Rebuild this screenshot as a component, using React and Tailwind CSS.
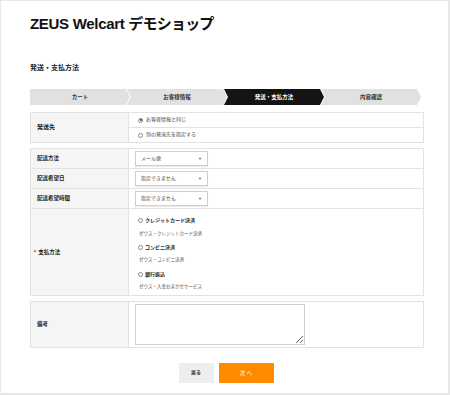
import { useState } from "react";

const steps = ["カート", "お客様情報", "発送・支払方法", "内容確認"];

const jp = "font-['Liberation_Sans','Noto_Sans_CJK_JP',sans-serif]";

const Radio = ({ checked }) => (
  <span className="w-[5px] h-[5px] rounded-full border border-[#888] bg-white flex items-center justify-center shrink-0">
    {checked && <span className="w-[2px] h-[2px] rounded-full bg-[#333]" />}
  </span>
);

const Select = ({ value }) => (
  <div className="w-[73px] h-[15px] border border-[#cfcfcf] bg-white flex items-center justify-between px-[5px] text-[5px] text-[#444] shadow-[0_1px_1px_rgba(0,0,0,0.08)]">
    <span>{value}</span>
    <span className="text-[4px] text-[#666]">▼</span>
  </div>
);

const App = () => {
  const [dest, setDest] = useState(0);

  return (
    <div className={`w-[450px] h-[395px] bg-white border-l border-t border-r-2 border-b-2 border-[#e8e8e8] overflow-hidden ${jp}`}>
      <div className="pl-[29px] pr-[24px]">
        {/* Title */}
        <h1 className="pt-[12px] text-[15px] leading-[22px] font-bold text-[#111] tracking-[-0.3px]">
          ZEUS Welcart <span className="tracking-[-0.8px]">デモショップ</span>
        </h1>

        <h2 className="mt-[28px] text-[7px] leading-[10px] font-bold text-[#222]">発送・支払方法</h2>

        {/* Steps */}
        <div className="mt-[16px] flex h-[16px]">
          {steps.map((s, i) => (
            <div
              key={s}
              className={`w-[100px] h-full flex items-center justify-center text-[5.5px] font-bold ${
                i === 0 ? "" : "-ml-[3px]"
              } ${i === 2 ? "bg-[#141414] text-white" : "bg-[#e1e1e1] text-[#333]"} ${
                i === 0
                  ? "[clip-path:polygon(0_0,calc(100%-4px)_0,100%_50%,calc(100%-4px)_100%,0_100%)]"
                  : "[clip-path:polygon(0_0,calc(100%-4px)_0,100%_50%,calc(100%-4px)_100%,0_100%,4px_50%)]"
              }`}
            >
              {s}
            </div>
          ))}
        </div>

        {/* Destination */}
        <div className="mt-[7px] border border-[#e2e2e2] grid grid-cols-[98px_1fr] h-[31px]">
          <div className="bg-[#f5f5f5] border-r border-[#e2e2e2] flex items-center pl-[6px] text-[6px] font-bold text-[#222]">
            発送先
          </div>
          <div className="flex flex-col">
            {["お客様情報と同じ", "別の発送先を指定する"].map((t, i) => (
              <div
                key={t}
                onClick={() => setDest(i)}
                className={`flex-1 flex items-center gap-[3px] pl-[9px] text-[5px] text-[#444] ${
                  i === 0 ? "border-b border-[#e2e2e2]" : ""
                }`}
              >
                <Radio checked={dest === i} />
                {t}
              </div>
            ))}
          </div>
        </div>

        {/* Delivery + payment */}
        <div className="mt-[5px] border border-[#e2e2e2]">
          {[
            ["配送方法", "メール便"],
            ["配送希望日", "指定できません"],
            ["配送希望時間", "指定できません"],
          ].map(([l, v]) => (
            <div key={l} className="grid grid-cols-[98px_1fr] h-[20px] border-b border-[#e2e2e2]">
              <div className="bg-[#f5f5f5] border-r border-[#e2e2e2] flex items-center pl-[6px] text-[5.5px] font-bold text-[#222]">
                {l}
              </div>
              <div className="flex items-center pl-[6px]">
                <Select value={v} />
              </div>
            </div>
          ))}
          <div className="grid grid-cols-[98px_1fr] h-[86px]">
            <div className="bg-[#f5f5f5] border-r border-[#e2e2e2] flex items-center pl-[3px] text-[5.5px] font-bold text-[#222]">
              <span className="text-[#e60012] mr-[2px]">*</span>支払方法
            </div>
            <div className="flex flex-col pl-[9px] pt-[5px]">
              {[
                ["クレジットカード決済", "ゼウス・クレジットカード決済"],
                ["コンビニ決済", "ゼウス・コンビニ決済"],
                ["銀行振込", "ゼウス・入金おまかせサービス"],
              ].map(([t, d]) => (
                <div key={t} className="flex flex-col">
                  <div className="h-[13.4px] flex items-center gap-[2px] text-[5px] font-bold text-[#222]">
                    <Radio />
                    {t}
                  </div>
                  <div className="h-[13.4px] flex items-center pl-[1px] text-[4.5px] text-[#555]">{d}</div>
                </div>
              ))}
            </div>
          </div>
        </div>

        {/* Remarks */}
        <div className="mt-[5px] border border-[#e2e2e2] grid grid-cols-[98px_1fr] h-[47px]">
          <div className="bg-[#f5f5f5] border-r border-[#e2e2e2] flex items-center pl-[6px] text-[5.5px] font-bold text-[#222]">
            備考
          </div>
          <div className="flex items-center pl-[6px]">
            <textarea className="w-[170px] h-[41px] border border-[#cfcfcf] bg-white resize-y" />
          </div>
        </div>

        {/* Buttons */}
        <div className="mt-[15px] flex justify-center gap-[5px] pr-[2px]">
          <button className="w-[35px] h-[20px] bg-[#eeeeee] text-[5px] font-bold text-[#333]">戻る</button>
          <button className="w-[55px] h-[20px] bg-[#ff8a00] text-[5.5px] text-white">次 へ</button>
        </div>
      </div>
    </div>
  );
};

export default App;
